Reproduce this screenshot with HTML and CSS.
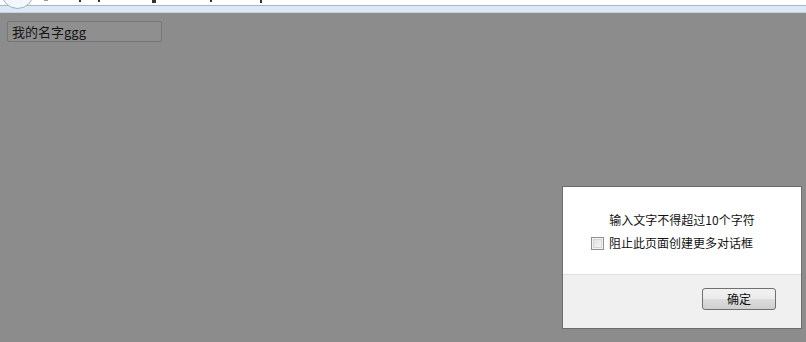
FILE: index.html
```html
<!DOCTYPE html>
<html lang="zh-CN">
<head>
<meta charset="utf-8">
<title>alert</title>
<link rel="stylesheet" href="styles.css">
</head>
<body>
<div class="chrome">
  <div class="addr">
    <span class="frag f1"></span><span class="frag f2"></span><span class="frag f3"></span>
    <span class="frag f4"></span><span class="frag f5"></span><span class="frag f6"></span>
  </div>
  <div class="tabline"></div>
  <div class="back-btn"></div>
</div>
<main class="page">
  <div class="name-input">我的名字ggg</div>
</main>
<div class="dialog">
  <div class="dialog-body">
    <p class="message">输入文字不得超过10个字符</p>
    <label class="prevent">
      <span class="checkbox"></span>
      <span class="prevent-text">阻止此页面创建更多对话框</span>
    </label>
  </div>
  <div class="dialog-footer">
    <button class="ok-btn">确定</button>
  </div>
</div>
</body>
</html>
```
FILE: styles.css
```css
html, body {
  margin: 0;
  padding: 0;
}
body {
  width: 806px;
  height: 342px;
  overflow: hidden;
  background: #8c8c8c;
  font-family: "Noto Sans CJK SC", "DejaVu Sans", sans-serif;
  position: relative;
}
.chrome {
  height: 13px;
  position: relative;
  overflow: hidden;
}
.addr {
  height: 5px;
  background: #ffffff;
  border-bottom: 1px solid #a9b6c5;
  overflow: hidden;
  position: relative;
}
.frag {
  position: absolute;
  top: 0;
  width: 2px;
  height: 2px;
  background: #333;
}
.f1 { left: 44px; width: 4px; height: 1px; background: #999; }
.f2 { left: 79px; }
.f3 { left: 98px; }
.f4 { left: 152px; width: 4px; height: 3px; }
.f5 { left: 210px; }
.f6 { left: 260px; height: 3px; }
.tabline {
  height: 6px;
  background: #dce8f5;
  border-bottom: 1px solid #c7d3e0;
}
.back-btn {
  position: absolute;
  left: 1px;
  top: -24px;
  width: 31px;
  height: 31px;
  border-radius: 50%;
  border: 1px solid #9fb0c3;
  background: #f3f7fb;
}
.page {
  padding: 8px 0 0 7px;
}
.name-input {
  box-sizing: border-box;
  width: 155px;
  height: 21px;
  border: 1px solid #767676;
  border-radius: 2px;
  background: #8f8f8f;
  padding-left: 4px;
  font-size: 13px;
  line-height: 19px;
  color: #151515;
}
.dialog {
  position: absolute;
  left: 562px;
  top: 186px;
  width: 238px;
  height: 141px;
  border: 1px solid #6c6c6c;
  background: #ffffff;
  display: flex;
  flex-direction: column;
  font-size: 12px;
  color: #111;
}
.dialog-body {
  height: 87px;
  padding-top: 26px;
  box-sizing: border-box;
}
.message {
  margin: 0;
  text-align: center;
  line-height: 14px;
  height: 14px;
}
.prevent {
  display: flex;
  align-items: center;
  margin-top: 9px;
  padding-left: 28px;
  height: 14px;
  line-height: 14px;
}
.checkbox {
  box-sizing: border-box;
  width: 13px;
  height: 13px;
  border: 1px solid #8e8f8f;
  background: linear-gradient(135deg, #dcdcdc, #fbfbfb);
  box-shadow: inset 0 0 0 1px #f4f4f4, inset 0 0 0 2px #d6d6d6;
  margin-right: 5px;
}
.dialog-footer {
  flex: 1;
  background: #f0f0f0;
  border-top: 1px solid #dfdfdf;
  display: flex;
  justify-content: flex-end;
  align-items: flex-start;
  padding: 13px 25px 0 0;
}
.ok-btn {
  box-sizing: border-box;
  width: 74px;
  height: 22px;
  border: 1px solid #707070;
  border-radius: 3px;
  background: linear-gradient(#f2f2f2 0%, #ebebeb 50%, #dddddd 51%, #cfcfcf 100%);
  font-family: "Noto Sans CJK SC", sans-serif;
  font-size: 12px;
  line-height: 18px;
  color: #111;
  padding: 0;
}
```
